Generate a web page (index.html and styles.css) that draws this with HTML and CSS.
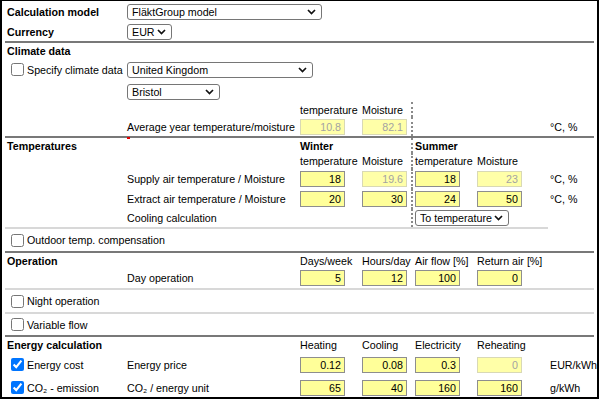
FILE: index.html
```html
<!DOCTYPE html>
<html>
<head>
<meta charset="utf-8">
<link rel="stylesheet" href="styles.css">
</head>
<body>
<div class="frame">
  <div class="form">
    <div class="row h21">
      <div class="c1 title">Calculation model</div>
      <select class="sel sel-model"><option>FläktGroup model</option></select>
    </div>
    <div class="row h19">
      <div class="c1 title">Currency</div>
      <select class="sel sel-cur"><option>EUR</option></select>
    </div>
    <div class="sep"></div>

    <div class="row h15">
      <div class="c1 title">Climate data</div>
    </div>
    <div class="row h23">
      <label class="check"><input type="checkbox">Specify climate data</label>
      <select class="sel sel-country"><option>United Kingdom</option></select>
    </div>
    <div class="row h21">
      <select class="sel sel-city"><option>Bristol</option></select>
    </div>
    <div class="row h15">
      <div class="c3">temperature</div>
      <div class="c4">Moisture</div>
      <div class="rule"></div>
    </div>
    <div class="row h19">
      <div class="c2">Average year temperature/moisture</div>
      <input class="num c3" value="10.8" disabled>
      <input class="num c4" value="82.1" disabled>
      <div class="rule"></div>
      <div class="c8">°C, %</div>
    </div>
    <div class="sep"></div>

    <div class="row h15">
      <div class="c1 title">Temperatures</div>
      <div class="c2 mark"></div>
      <div class="c3 title">Winter</div>
      <div class="rule"></div>
      <div class="c6 title">Summer</div>
    </div>
    <div class="row h16">
      <div class="c3">temperature</div>
      <div class="c4">Moisture</div>
      <div class="rule"></div>
      <div class="c6">temperature</div>
      <div class="c7">Moisture</div>
    </div>
    <div class="row h20">
      <div class="c2">Supply air temperature / Moisture</div>
      <input class="num c3" value="18">
      <input class="num c4" value="19.6" disabled>
      <div class="rule"></div>
      <input class="num c6" value="18">
      <input class="num c7" value="23" disabled>
      <div class="c8">°C, %</div>
    </div>
    <div class="row h20">
      <div class="c2">Extract air temperature / Moisture</div>
      <input class="num c3" value="20">
      <input class="num c4" value="30">
      <div class="rule"></div>
      <input class="num c6" value="24">
      <input class="num c7" value="50">
      <div class="c8">°C, %</div>
    </div>
    <div class="row h18">
      <div class="c2">Cooling calculation</div>
      <div class="rule"></div>
      <select class="sel sel-cool"><option>To temperature</option></select>
    </div>
    <div class="sep light short"></div>

    <div class="row h22">
      <label class="check"><input type="checkbox">Outdoor temp. compensation</label>
    </div>
    <div class="sep"></div>

    <div class="row h15">
      <div class="c1 title">Operation</div>
      <div class="c3">Days/week</div>
      <div class="c4">Hours/day</div>
      <div class="c6">Air flow [%]</div>
      <div class="c7">Return air [%]</div>
    </div>
    <div class="row h20">
      <div class="c2">Day operation</div>
      <input class="num c3" value="5">
      <input class="num c4" value="12">
      <input class="num c6" value="100">
      <input class="num c7" value="0">
    </div>
    <div class="sep light"></div>
    <div class="row h22">
      <label class="check"><input type="checkbox">Night operation</label>
    </div>
    <div class="sep light"></div>
    <div class="row h21">
      <label class="check"><input type="checkbox">Variable flow</label>
    </div>
    <div class="sep"></div>

    <div class="row h16">
      <div class="c1 title">Energy calculation</div>
      <div class="c3">Heating</div>
      <div class="c4">Cooling</div>
      <div class="c6">Electricity</div>
      <div class="c7">Reheating</div>
    </div>
    <div class="row h23">
      <label class="check"><input type="checkbox" checked>Energy cost</label>
      <div class="c2">Energy price</div>
      <input class="num c3" value="0.12">
      <input class="num c4" value="0.08">
      <input class="num c6" value="0.3">
      <input class="num c7" value="0" disabled>
      <div class="c8">EUR/kWh</div>
    </div>
    <div class="row h23">
      <label class="check"><input type="checkbox" checked>CO₂ - emission</label>
      <div class="c2">CO₂ / energy unit</div>
      <input class="num c3" value="65">
      <input class="num c4" value="40">
      <input class="num c6" value="160">
      <input class="num c7" value="160">
      <div class="c8">g/kWh</div>
    </div>
  </div>
</div>
</body>
</html>
```

FILE: styles.css
```css
* { box-sizing: border-box; }
html, body { margin: 0; padding: 0; background: #fff; }
body {
  font-family: "Liberation Sans", Arial, sans-serif;
  font-size: 10.7px;
  color: #000;
}
.frame {
  width: 599px;
  height: 399px;
  border: 2px solid #000;
  border-top-width: 1px;
  overflow: hidden;
  background: #fff;
}
.form {
  display: flex;
  flex-direction: column;
  padding: 0 3px;
}
.row {
  display: grid;
  grid-template-columns: 120px 173px 62px 50px 3px 62px 73px 1fr;
  align-items: center;
}
.row > div, .row > label { padding-left: 2px; white-space: nowrap; }
.h15 { height: 15px; }
.h16 { height: 16px; }
.h18 { height: 18px; }
.h19 { height: 19px; }
.h20 { height: 20px; }
.h21 { height: 21px; }
.h22 { height: 22px; }
.h23 { height: 23px; }
.c1 { grid-column: 1; }
.c2 { grid-column: 2; }
.c3 { grid-column: 3; }
.c4 { grid-column: 4; }
.c6 { grid-column: 6; }
.c7 { grid-column: 7; }
.c8 { grid-column: 8; }
.title { font-weight: bold; }
.check {
  grid-column: 1;
  display: flex;
  align-items: center;
}
.check input {
  flex: none;
  width: 13px;
  height: 13px;
  margin: 0 3px 0 4px;
}
.rule {
  grid-column: 5;
  align-self: stretch;
  border-left: 2px dotted #8a8a8a;
  margin-left: 1px;
}
.row > .rule { padding-left: 0; }
.mark {
  grid-column: 2;
  align-self: start;
  justify-self: start;
  height: 2px;
  margin-top: -1px;
  background: #e00000;
}
.row > .mark { padding-left: 0; margin-left: 2px; width: 3px; }
.sep { height: 2px; background: #787878; }
.sep.light { background: #d8d8d8; }
.sep.short { width: 543px; }
.num {
  width: 45px;
  height: 16px;
  margin: 0 0 0 2px;
  padding: 0 3px 0 2px;
  border: 1px solid #8e8e8e;
  border-radius: 0;
  background: #ffff99;
  font-family: "Liberation Sans", Arial, sans-serif;
  font-size: 10.7px;
  color: #000;
  text-align: right;
  justify-self: start;
}
.num:disabled {
  background: #ffffa8;
  border-color: #d9d9b5;
  color: #a3a3a3;
}
.sel {
  grid-column: 2 / -1;
  justify-self: start;
  height: 16px;
  margin: 0 0 0 2px;
  padding: 0 14px 0 4px;
  font-family: "Liberation Sans", Arial, sans-serif;
  font-size: 10.7px;
  color: #000;
  border: 1px solid #767676;
  border-radius: 3px;
  -webkit-appearance: none;
  appearance: none;
  background-color: #fff;
  background-image: url("data:image/svg+xml,%3Csvg xmlns='http://www.w3.org/2000/svg' width='9' height='6' viewBox='0 0 9 6'%3E%3Cpath d='M1 1l3.5 3.5L8 1' fill='none' stroke='%23111' stroke-width='1.7'/%3E%3C/svg%3E");
  background-repeat: no-repeat;
  background-position: right 5px center;
  background-size: 9px 6px;
}
.sel-model { width: 195px; }
.sel-cur { width: 45px; }
.sel-country { width: 186px; }
.sel-city { width: 93px; }
.sel-cool { grid-column: 6 / -1; width: 94px; }
```
